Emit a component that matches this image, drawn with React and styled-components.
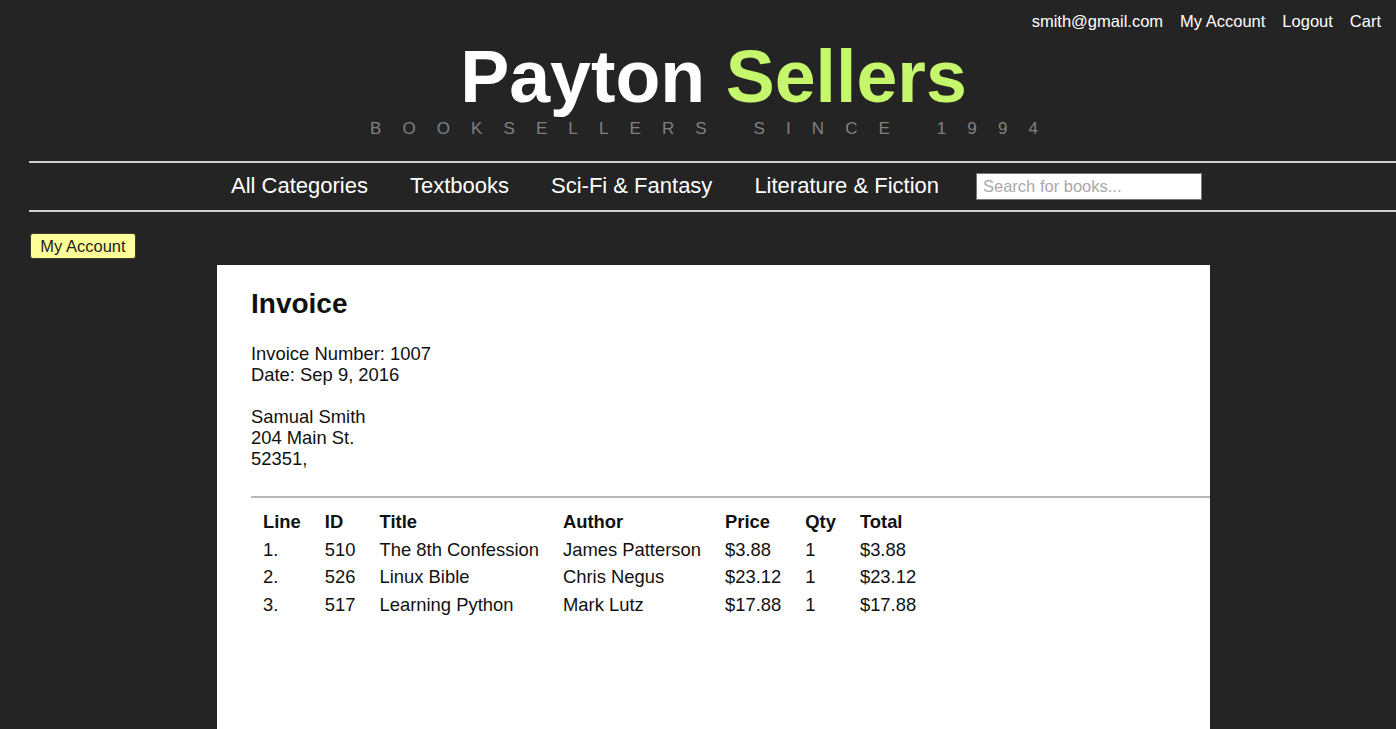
import React from 'react';
import styled, { createGlobalStyle } from 'styled-components';

const GlobalStyle = createGlobalStyle`
    html, body {
        margin: 0;
        padding: 0;
        background: #242424;
        overflow-x: hidden;
    }
    body {
        font-family: "Liberation Sans", Arial, sans-serif;
    }
`;

const Page = styled.div`
    min-height: 729px;
    background: #242424;
    color: #fff;
`;

const TopLinks = styled.div`
    display: flex;
    justify-content: flex-end;
    gap: 17px;
    padding: 12px 15px 0 0;
    font-size: 16.5px;
    line-height: 18px;
`;

const TopLink = styled.a`
    color: #fff;
    text-decoration: none;
`;

const Container = styled.div`
    margin-left: 29px;
    margin-right: -2px;
`;

const Brand = styled.h1`
    margin: 10px 0 0;
    text-align: center;
    font-size: 73.5px;
    line-height: 73px;
    font-weight: bold;
    color: #fff;
    span {
        color: #c5f66c;
    }
`;

const Tagline = styled.div`
    margin-top: 6px;
    padding-left: 2px;
    text-align: center;
    font-size: 17px;
    line-height: 20px;
    letter-spacing: 21.1px;
    color: #808080;
`;

const Nav = styled.nav`
    margin-top: 22px;
    height: 47px;
    border-top: 2px solid #cfcfcf;
    border-bottom: 2px solid #cfcfcf;
    display: flex;
    align-items: center;
    justify-content: center;
    gap: 42px;
    padding-left: 6px;
`;

const NavLink = styled.a`
    color: #fff;
    font-size: 22px;
    line-height: 26px;
    text-decoration: none;
    margin-top: -2px;
`;

const Search = styled.input`
    box-sizing: border-box;
    width: 226px;
    height: 27px;
    margin-left: -5px;
    padding: 0 6px;
    border: 1px solid #777;
    background: #fff;
    font-family: "Liberation Sans", Arial, sans-serif;
    font-size: 16.5px;
    &::placeholder {
        color: #a9a9a9;
    }
`;

const AccountButton = styled.button`
    display: block;
    margin: 21px 0 0 1px;
    width: 106px;
    height: 26px;
    padding: 0;
    background: #ffff99;
    border: 1px solid #3a3a2a;
    border-radius: 3px;
    color: #222;
    font-family: "Liberation Sans", Arial, sans-serif;
    font-size: 16.5px;
`;

const Card = styled.div`
    width: 993px;
    min-height: 480px;
    margin: 6px auto 0;
    box-sizing: border-box;
    padding: 23px 0 0 34px;
    background: #fff;
    color: #111;
`;

const Heading = styled.h2`
    margin: 0;
    font-size: 28px;
    line-height: 32px;
    font-weight: bold;
`;

const Block = styled.div`
    margin-top: ${p => p.$gap}px;
    font-size: 18.4px;
    line-height: 21px;
`;

const Rule = styled.hr`
    margin: 27px 0 0;
    border: 0;
    height: 2px;
    background: #b8b8b8;
`;

const Table = styled.table`
    margin-top: 10px;
    border-collapse: collapse;
    font-size: 18.4px;
`;

const Th = styled.th`
    text-align: left;
    font-weight: bold;
    padding: 3px 12px;
    line-height: 21.7px;
`;

const Td = styled.td`
    padding: 3px 12px;
    line-height: 21.7px;
`;

const items = [
    ['1.', '510', 'The 8th Confession', 'James Patterson', '$3.88', '1', '$3.88'],
    ['2.', '526', 'Linux Bible', 'Chris Negus', '$23.12', '1', '$23.12'],
    ['3.', '517', 'Learning Python', 'Mark Lutz', '$17.88', '1', '$17.88'],
];

const columns = ['Line', 'ID', 'Title', 'Author', 'Price', 'Qty', 'Total'];

export default function App() {
    return (
        <Page>
            <GlobalStyle />
            <TopLinks>
                <TopLink href="#">smith@gmail.com</TopLink>
                <TopLink href="#">My Account</TopLink>
                <TopLink href="#">Logout</TopLink>
                <TopLink href="#">Cart</TopLink>
            </TopLinks>
            <Container>
                <Brand>Payton <span>Sellers</span></Brand>
                <Tagline>BOOKSELLERS SINCE 1994</Tagline>
                <Nav>
                    <NavLink href="#">All Categories</NavLink>
                    <NavLink href="#">Textbooks</NavLink>
                    <NavLink href="#">Sci-Fi &amp; Fantasy</NavLink>
                    <NavLink href="#">Literature &amp; Fiction</NavLink>
                    <Search placeholder="Search for books..." />
                </Nav>
                <AccountButton>My Account</AccountButton>
                <Card>
                    <Heading>Invoice</Heading>
                    <Block $gap={23}>
                        Invoice Number: 1007<br />
                        Date: Sep 9, 2016
                    </Block>
                    <Block $gap={21}>
                        Samual Smith<br />
                        204 Main St.<br />
                        52351,
                    </Block>
                    <Rule />
                    <Table>
                        <thead>
                            <tr>
                                {columns.map(c => <Th key={c}>{c}</Th>)}
                            </tr>
                        </thead>
                        <tbody>
                            {items.map(row => (
                                <tr key={row[1]}>
                                    {row.map((cell, i) => <Td key={i}>{cell}</Td>)}
                                </tr>
                            ))}
                        </tbody>
                    </Table>
                </Card>
            </Container>
        </Page>
    );
}
